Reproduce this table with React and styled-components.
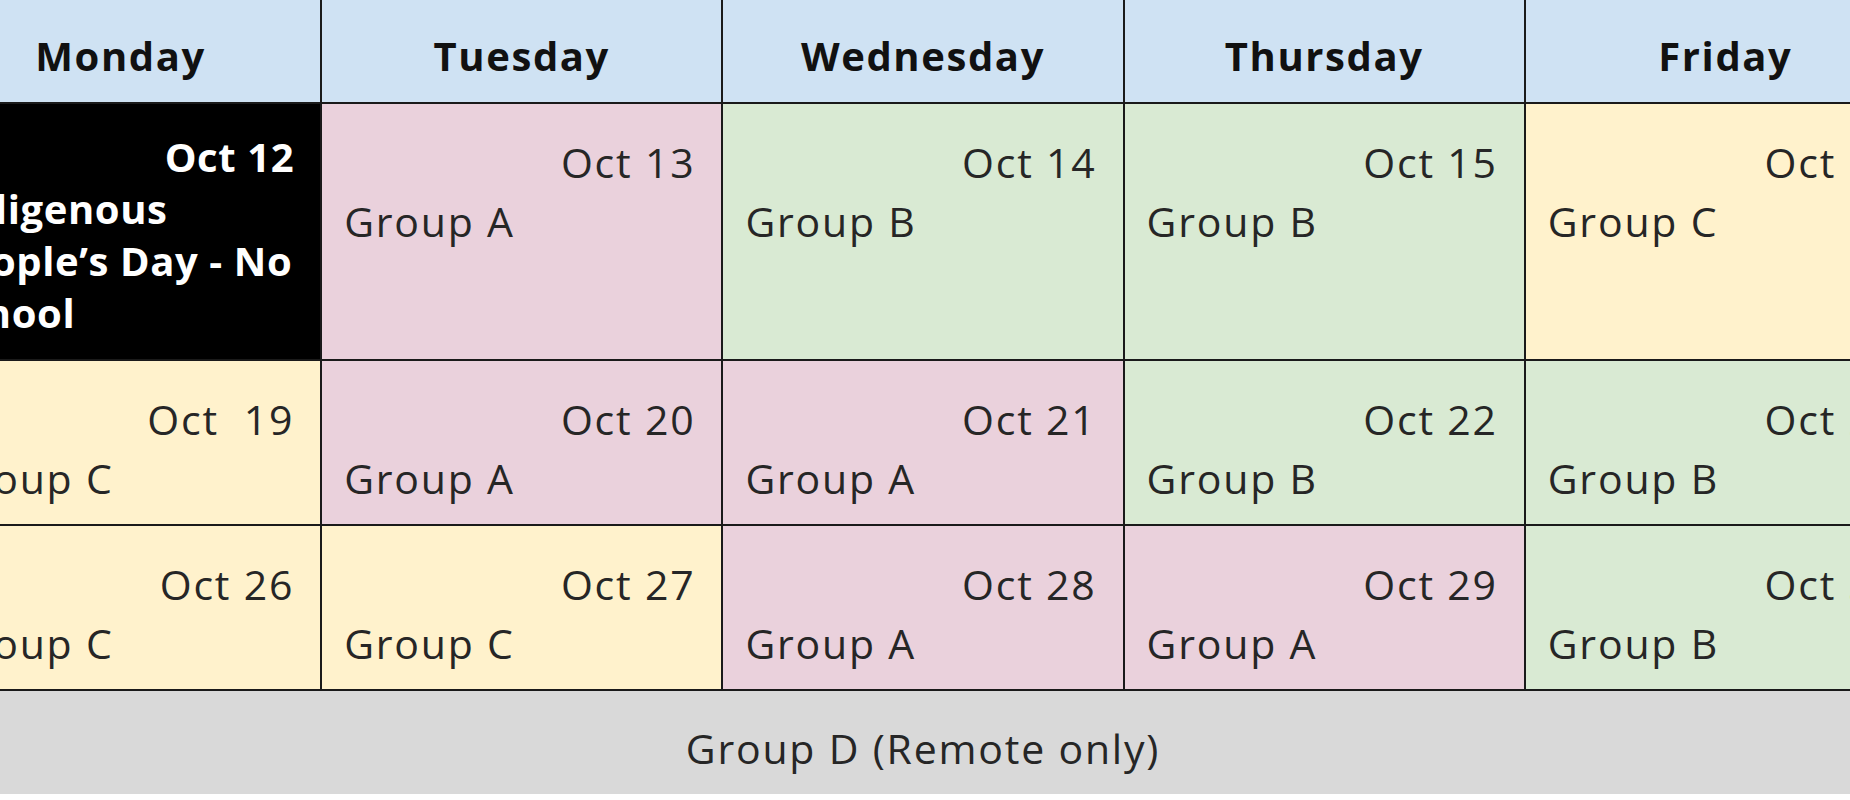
import styled, { createGlobalStyle } from 'styled-components';

const GlobalStyle = createGlobalStyle`
  html, body {
    margin: 0;
    padding: 0;
    background: #fff;
    overflow: hidden;
  }
  body {
    font-family: "Open Sans", "Noto Sans", sans-serif;
  }
`

const COLORS = {
  A: '#ead1dc',
  B: '#d9ead3',
  C: '#fff2cc',
};

const Page = styled.div`
  width: 1850px;
  height: 800px;
  overflow: hidden;
`

const Table = styled.table`
  border-collapse: collapse;
  table-layout: fixed;
  width: 2008px;
  margin-left: -81px;
  color: #262626;
`

const HeadCell = styled.th`
  height: 103px;
  padding: 9px 0 0;
  box-sizing: border-box;
  background-color: #cfe2f3;
  border: 2px solid #1a1a1a;
  border-top: none;
  font-size: 40px;
  letter-spacing: 1.6px;
  font-weight: 700;
  color: #111;
  text-align: center;
  vertical-align: middle;
`

const Cell = styled.td`
  height: ${({ h }) => h}px;
  padding: 28px 26px 0 22px;
  box-sizing: border-box;
  background-color: ${({ bg }) => bg};
  border: 2px solid #1a1a1a;
  vertical-align: top;
  font-size: 41px;
  letter-spacing: 1.8px;
`

const DateLine = styled.div`
  text-align: right;
  line-height: 60px;
  white-space: pre;
`

const GroupLine = styled.div`
  text-align: left;
  line-height: 58px;
`

const HolidayCell = styled(Cell)`
  background-color: #000;
  color: #fff;
  font-weight: 700;
  font-size: 40px;
  letter-spacing: 0.6px;
  padding: 27px 22px 0 20px;
  line-height: 52px;
`

const HolidayDate = styled.div`
  text-align: right;
  padding-right: 4px;
`

const FooterCell = styled.td`
  height: 104px;
  padding: 10px 0 0;
  box-sizing: border-box;
  background-color: #d9d9d9;
  border: 2px solid #1a1a1a;
  border-bottom: none;
  text-align: center;
  vertical-align: middle;
  font-size: 41px;
  letter-spacing: 1.8px;
`

const days = ['Monday', 'Tuesday', 'Wednesday', 'Thursday', 'Friday'];

const weeks = [
  {
    h: 257,
    cells: [
      null,
      { date: 'Oct 13', group: 'A' },
      { date: 'Oct 14', group: 'B' },
      { date: 'Oct 15', group: 'B' },
      { date: 'Oct 16', group: 'C' },
    ],
  },
  {
    h: 165,
    cells: [
      { date: 'Oct  19', group: 'C' },
      { date: 'Oct 20', group: 'A' },
      { date: 'Oct 21', group: 'A' },
      { date: 'Oct 22', group: 'B' },
      { date: 'Oct 23', group: 'B' },
    ],
  },
  {
    h: 165,
    cells: [
      { date: 'Oct 26', group: 'C' },
      { date: 'Oct 27', group: 'C' },
      { date: 'Oct 28', group: 'A' },
      { date: 'Oct 29', group: 'A' },
      { date: 'Oct 30', group: 'B' },
    ],
  },
];

const App = () => {
  return (
    <Page>
      <GlobalStyle />
      <Table>
        <thead>
          <tr>
            {days.map((d) => (
              <HeadCell key={d}>{d}</HeadCell>
            ))}
          </tr>
        </thead>
        <tbody>
          {weeks.map((week, i) => (
            <tr key={i}>
              {week.cells.map((c, j) =>
                c ? (
                  <Cell key={j} h={week.h} bg={COLORS[c.group]}>
                    <DateLine>{c.date}</DateLine>
                    <GroupLine>Group {c.group}</GroupLine>
                  </Cell>
                ) : (
                  <HolidayCell key={j} h={week.h}>
                    <HolidayDate>Oct 12</HolidayDate>
                    Indigenous People’s Day - No School
                  </HolidayCell>
                )
              )}
            </tr>
          ))}
          <tr>
            <FooterCell colSpan={5}>Group D (Remote only)</FooterCell>
          </tr>
        </tbody>
      </Table>
    </Page>
  )
}

export default App;
